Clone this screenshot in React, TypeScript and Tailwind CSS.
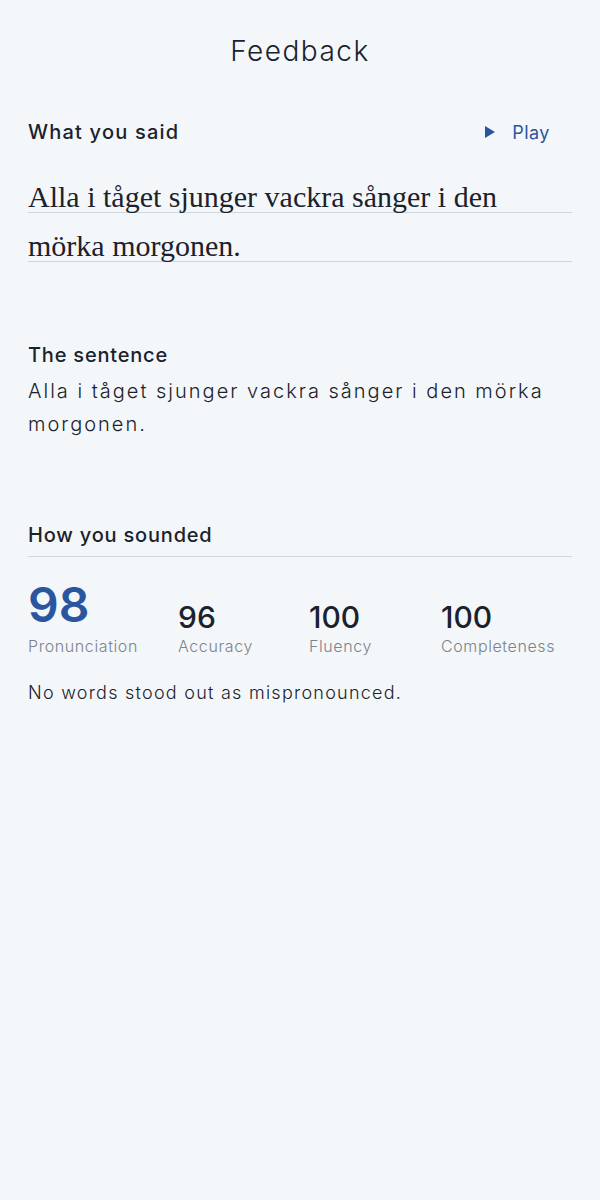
import React from "react";

const sans = { fontFamily: "Inter, 'Noto Sans', sans-serif" };

export default function App() {
  return (
    <div className="min-h-[1200px] w-full bg-[#f4f7f9] text-[#1b222c]" style={sans}>
      <div className="pt-[33px] text-center text-[28px] font-light leading-[36px] tracking-[1.5px]">Feedback</div>

      <div className="px-[28px]">
        <div className="mt-[49px] flex items-center justify-between">
          <div className="text-[20px] font-medium leading-[28px] tracking-[1.2px]">What you said</div>
          <button className="mr-[22px] flex items-center gap-[16px] text-[18px] tracking-[0.5px] text-[#2a56a0]">
            <svg width="12" height="14" viewBox="0 0 12 14"><path d="M1 1 L11 7 L1 13 Z" fill="#2a56a0" /></svg>
            <span>Play</span>
          </button>
        </div>

        <div className="mt-[18px] whitespace-nowrap text-[30px] leading-[30px]" style={{ fontFamily: "'Liberation Serif', serif" }}>
          <div className="border-b border-[#cfd6dd] pt-[18px]">Alla i tåget sjunger vackra sånger i den</div>
          <div className="border-b border-[#cfd6dd] pt-[18px]">mörka morgonen.</div>
        </div>

        <div className="mt-[79px] text-[20px] font-medium leading-[28px] tracking-[0.8px]">The sentence</div>
        <div className="mt-[6px] text-[20px] font-light leading-[33px] tracking-[2px]">
          Alla i tåget sjunger vackra sånger i den mörka morgonen.
        </div>

        <div className="mt-[80px] border-b border-[#d2d8de] pb-[7px] text-[20px] font-medium leading-[28px] tracking-[0.8px]">How you sounded</div>

        <div className="mt-[22px] grid grid-cols-[150px_131px_132px_1fr] items-end">
          <div>
            <div className="text-[48px] font-semibold leading-[52px] text-[#2a56a0]">98</div>
            <div className="mt-[3px] text-[16px] font-light tracking-[0.6px] text-[#7b838c]">Pronunciation</div>
          </div>
          {[["96", "Accuracy"], ["100", "Fluency"], ["100", "Completeness"]].map(([n, l]) => (
            <div key={l}>
              <div className="text-[30px] font-medium leading-[34px]">{n}</div>
              <div className="text-[16px] font-light tracking-[0.6px] text-[#7b838c]">{l}</div>
            </div>
          ))}
        </div>

        <div className="mt-[21px] text-[18px] font-light tracking-[1.25px]">No words stood out as mispronounced.</div>
      </div>
    </div>
  );
}
